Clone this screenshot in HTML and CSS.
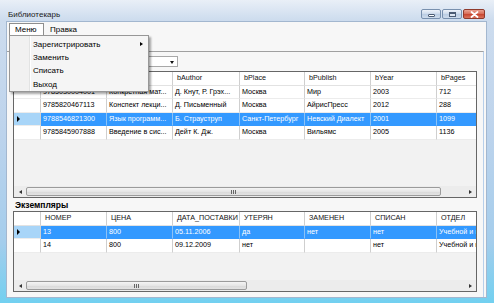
FILE: index.html
```html
<!DOCTYPE html>
<html lang="ru">
<head>
    <meta charset="UTF-8">
    <title>Библиотекарь</title>
    <link rel="stylesheet" href="styles.css">
</head>
<body>
    <div class="window">
        <div class="titlebar">
            <span class="title">Библиотекарь</span>
            <div class="caption-btns">
                <div class="cap-btn"><span class="ico-min"></span></div>
                <div class="cap-btn"><span class="ico-max"></span></div>
                <div class="cap-btn cap-close">
                    <svg width="9" height="7" viewBox="0 0 9 7"><path d="M1.5 1 L7.5 6 M7.5 1 L1.5 6" stroke="#fff" stroke-width="1.8" stroke-linecap="round"/></svg>
                </div>
            </div>
        </div>

        <div class="client">
            <div class="menubar">
                <div class="menu-item open">Меню
                    <div class="dropdown">
                        <div class="dd-item">Зарегистрировать<span class="sub-arrow"></span></div>
                        <div class="dd-item">Заменить</div>
                        <div class="dd-item">Списать</div>
                        <div class="dd-item">Выход</div>
                    </div>
                </div>
                <div class="menu-item">Правка</div>
            </div>
            <div class="toolarea"></div>

            <div class="panel">
                <div class="combo"><span class="combo-arrow"></span></div>

                <!-- книги -->
                <div class="grid grid-top">
                    <div class="rows">
                        <div class="row head">
                            <div class="cell rh"></div>
                            <div class="cell">bISBN</div>
                            <div class="cell">bName</div>
                            <div class="cell">bAuthor</div>
                            <div class="cell">bPlace</div>
                            <div class="cell">bPublish</div>
                            <div class="cell">bYear</div>
                            <div class="cell">bPages</div>
                        </div>
                        <div class="row">
                            <div class="cell rh"></div>
                            <div class="cell">9785030004001</div>
                            <div class="cell">Конкретная мат...</div>
                            <div class="cell">Д. Кнут, Р. Грэх...</div>
                            <div class="cell">Москва</div>
                            <div class="cell">Мир</div>
                            <div class="cell">2003</div>
                            <div class="cell">712</div>
                        </div>
                        <div class="row">
                            <div class="cell rh"></div>
                            <div class="cell">9785820467113</div>
                            <div class="cell">Конспект лекци...</div>
                            <div class="cell">Д. Письменный</div>
                            <div class="cell">Москва</div>
                            <div class="cell">АйрисПресс</div>
                            <div class="cell">2012</div>
                            <div class="cell">288</div>
                        </div>
                        <div class="row sel">
                            <div class="cell rh"><span class="row-arrow"></span></div>
                            <div class="cell">9788546821300</div>
                            <div class="cell">Язык программ...</div>
                            <div class="cell">Б. Страуструп</div>
                            <div class="cell">Санкт-Петербург</div>
                            <div class="cell">Невский Диалект</div>
                            <div class="cell">2001</div>
                            <div class="cell">1099</div>
                        </div>
                        <div class="row">
                            <div class="cell rh"></div>
                            <div class="cell">9785845907888</div>
                            <div class="cell">Введение в сис...</div>
                            <div class="cell">Дейт К. Дж.</div>
                            <div class="cell">Москва</div>
                            <div class="cell">Вильямс</div>
                            <div class="cell">2005</div>
                            <div class="cell">1136</div>
                        </div>
                    </div>
                    <div class="hscroll">
                        <span class="arr"><span class="arr-left"></span></span>
                        <div class="thumb" style="width:415px"><span class="grip"></span></div>
                        <div class="track"></div>
                        <span class="arr"><span class="arr-right"></span></span>
                    </div>
                </div>

                <div class="caption">Экземпляры</div>

                <!-- экземпляры -->
                <div class="grid grid-bottom">
                    <div class="rows">
                        <div class="row head">
                            <div class="cell rh"></div>
                            <div class="cell">НОМЕР</div>
                            <div class="cell">ЦЕНА</div>
                            <div class="cell">ДАТА_ПОСТАВКИ</div>
                            <div class="cell">УТЕРЯН</div>
                            <div class="cell">ЗАМЕНЕН</div>
                            <div class="cell">СПИСАН</div>
                            <div class="cell">ОТДЕЛ</div>
                        </div>
                        <div class="row sel">
                            <div class="cell rh"><span class="row-arrow"></span></div>
                            <div class="cell">13</div>
                            <div class="cell">800</div>
                            <div class="cell">05.11.2006</div>
                            <div class="cell">да</div>
                            <div class="cell">нет</div>
                            <div class="cell">нет</div>
                            <div class="cell">Учебной и н</div>
                        </div>
                        <div class="row">
                            <div class="cell rh"></div>
                            <div class="cell">14</div>
                            <div class="cell">800</div>
                            <div class="cell">09.12.2009</div>
                            <div class="cell">нет</div>
                            <div class="cell"></div>
                            <div class="cell">нет</div>
                            <div class="cell">Учебной и н</div>
                        </div>
                    </div>
                    <div class="hscroll">
                        <span class="arr"><span class="arr-left"></span></span>
                        <div class="thumb" style="width:221px"><span class="grip"></span></div>
                        <div class="track"></div>
                        <span class="arr"><span class="arr-right"></span></span>
                    </div>
                </div>
            </div>
        </div>
    </div>
</body>
</html>
```

FILE: styles.css
```css
* {
    box-sizing: border-box;
}
body {
    margin: 0;
    width: 494px;
    height: 303px;
    overflow: hidden;
    font-family: "Liberation Sans", Arial, sans-serif;
    color: #000;
}
.window {
    height: 303px;
    padding: 0 8px 6px 7px;
    display: flex;
    flex-direction: column;
    background: linear-gradient(#e9eff7 0, #cddcee 20px, #bcd3ec 45%, #a4cdec 80%, #72d0f0 100%);
}
.titlebar {
    height: 22px;
    flex: none;
    display: flex;
    align-items: flex-start;
}
.title {
    font-size: 8px;
    line-height: 8px;
    padding: 11px 0 0 1px;
    color: #1b1b1b;
}
.caption-btns {
    margin: 9px 1px 0 auto;
    display: flex;
    gap: 1px;
}
.cap-btn {
    width: 20px;
    height: 10px;
    border: 1px solid #7890ae;
    border-radius: 2px;
    background: linear-gradient(#eef3fa, #cbd9ea 50%, #b9cce3 51%, #cfdcec);
    display: flex;
    align-items: center;
    justify-content: center;
}
.cap-close {
    width: 22px;
    border-color: #8f3a2c;
    background: linear-gradient(#eaa292, #d66a55 50%, #c7432e 51%, #d9735c);
}
.ico-min {
    width: 7px;
    height: 3px;
    margin-top: 3px;
    background: #fff;
    border: 1px solid #4c5c74;
    border-radius: 1px;
}
.ico-max {
    width: 7px;
    height: 5px;
    border: 1px solid #4c5c74;
    border-top-width: 2px;
    background: #dfe7f2;
}

.client {
    flex: 1;
    background: #f7f7f7;
    display: flex;
    flex-direction: column;
    outline: 1px solid #a3b7cf;
}
.menubar {
    height: 14px;
    flex: none;
    padding: 1px 0 0 2px;
    display: flex;
    font-size: 8px;
}
.menu-item {
    position: relative;
    height: 12px;
    line-height: 12px;
    padding: 0 5px;
    border: 1px solid transparent;
    border-bottom: none;
}
.menu-item.open {
    width: 35px;
    padding-left: 5px;
    background: #fff;
    border-color: #8e8e8e;
}
.dropdown {
    position: absolute;
    left: -1px;
    top: 11px;
    width: 140px;
    height: 57px;
    padding: 2px 0;
    background: linear-gradient(to right, #f1f1f1 0, #f1f1f1 19px, #e2e3e3 19px, #e2e3e3 20px, #fff 20px, #fff 21px, #f5f5f5 21px);
    border: 1px solid #979797;
    box-shadow: 2px 2px 2px rgba(0, 0, 0, 0.35);
    z-index: 10;
}
.dd-item {
    position: relative;
    height: 13.2px;
    line-height: 13.2px;
    padding-left: 23px;
    white-space: nowrap;
}
.sub-arrow {
    position: absolute;
    left: 130px;
    top: 4px;
    border-left: 3px solid #000;
    border-top: 2.5px solid transparent;
    border-bottom: 2.5px solid transparent;
}
.toolarea {
    height: 15px;
    flex: none;
}

.panel {
    flex: 1;
    margin-right: 2px;
    border-top: 1px solid #a0a0a0;
    border-right: 1px solid #b7cfea;
    padding: 4px 0 0 6px;
    display: flex;
    flex-direction: column;
}
.combo {
    width: 165px;
    height: 11px;
    flex: none;
    border: 1px solid #a8a8a8;
    background: #fff;
    position: relative;
}
.combo-arrow {
    position: absolute;
    right: 3px;
    top: 4px;
    border-top: 3px solid #111;
    border-left: 2.5px solid transparent;
    border-right: 2.5px solid transparent;
}

.grid {
    width: 464px;
    flex: none;
    border: 1px solid #666;
    background: #f2f2f2;
    display: flex;
    flex-direction: column;
    overflow: hidden;
    margin-top: 4px;
}
.grid-top {
    height: 127px;
}
.grid-bottom {
    height: 81px;
    margin-top: 0;
}
.rows {
    flex: 1;
    overflow: hidden;
}
.row {
    display: grid;
    grid-template-columns: 27px 66px 66px 67px 65px 66px 66px 66px;
    height: 13.5px;
    font-size: 7.2px;
    background: #fff;
}
.cell {
    overflow: hidden;
    white-space: nowrap;
    padding-left: 2px;
    line-height: 12.5px;
    border-right: 1px solid #cfcfcf;
    border-bottom: 1px solid #ececec;
}
.row.head .cell {
    padding-left: 4px;
    color: #111;
    border-bottom-color: #e2e2e2;
}
.cell.rh {
    position: relative;
}
.row.sel .cell {
    background: #3399ff;
    color: #fff;
    border-right-color: #8cc2f5;
    border-bottom-color: #3399ff;
}
.row.sel .cell.rh {
    background: #a8d5f8;
    border-right-color: #cfcfcf;
    border-bottom-color: #ececec;
}
.row-arrow {
    position: absolute;
    left: 3px;
    top: 3px;
    border-left: 3px solid #000;
    border-top: 3px solid transparent;
    border-bottom: 3px solid transparent;
}

.caption {
    height: 13px;
    flex: none;
    padding: 2px 0 0 2px;
    line-height: 11px;
    font-size: 8.5px;
    font-weight: bold;
}

.hscroll {
    height: 11px;
    flex: none;
    display: flex;
    align-items: center;
    background: #ececec;
}
.arr {
    width: 12px;
    height: 11px;
    flex: none;
    display: flex;
    align-items: center;
    justify-content: center;
}
.arr-left {
    border-right: 3px solid #333;
    border-top: 2px solid transparent;
    border-bottom: 2px solid transparent;
}
.arr-right {
    border-left: 3px solid #333;
    border-top: 2px solid transparent;
    border-bottom: 2px solid transparent;
}
.thumb {
    height: 9px;
    flex: none;
    border: 1px solid #9b9b9b;
    border-radius: 2px;
    background: linear-gradient(#f4f4f4, #e6e6e6 50%, #d9d9d9 51%, #e3e3e3);
    display: flex;
    align-items: center;
    justify-content: center;
}
.grip {
    width: 5px;
    height: 4px;
    border-left: 1px solid #666;
    border-right: 1px solid #666;
    position: relative;
}
.grip::after {
    content: "";
    position: absolute;
    left: 1px;
    top: 0;
    width: 1px;
    height: 4px;
    background: #666;
}
.track {
    flex: 1;
}
```
